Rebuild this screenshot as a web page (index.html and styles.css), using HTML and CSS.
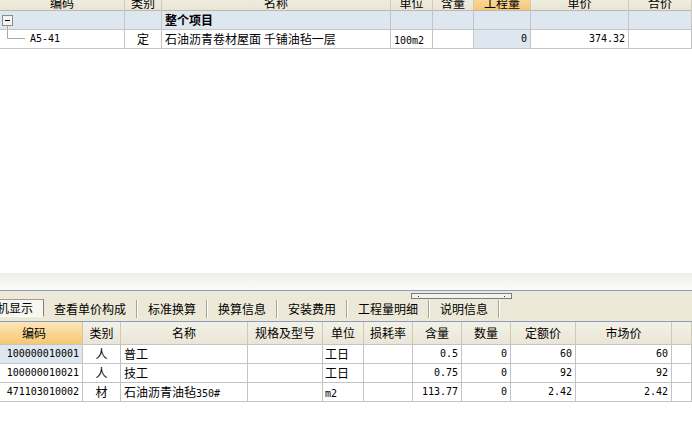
FILE: index.html
```html
<!DOCTYPE html>
<html lang="zh">
<head>
<meta charset="utf-8">
<title>定额</title>
<link rel="stylesheet" href="styles.css">
</head>
<body>
<div class="app">
  <div class="top">
    <div class="grid top-grid">
      <div class="hd">编码</div>
      <div class="hd">类别</div>
      <div class="hd">名称</div>
      <div class="hd">单位</div>
      <div class="hd">含量</div>
      <div class="hd sel">工程量</div>
      <div class="hd">单价</div>
      <div class="hd">合价</div>

      <div class="c r1 tree"><svg width="16" height="18" viewBox="0 0 16 18"><rect x="2.5" y="4.5" width="10" height="10" fill="#F4F4F4" stroke="#8C8C8C"/><path d="M5 9.5H10" stroke="#000"/><path d="M7.5 15V18" stroke="#A8A8A8"/></svg></div>
      <div class="c r1"></div>
      <div class="c r1 b">整个项目</div>
      <div class="c r1"></div>
      <div class="c r1"></div>
      <div class="c r1"></div>
      <div class="c r1"></div>
      <div class="c r1"></div>

      <div class="c tree"><svg width="25" height="18" viewBox="0 0 25 18"><path d="M7.5 0V8.5H25" stroke="#A8A8A8" fill="none"/></svg><span class="n code">A5-41</span></div>
      <div class="c ctr">定</div>
      <div class="c">石油沥青卷材屋面 千铺油毡一层</div>
      <div class="c"><span class="n">100m2</span></div>
      <div class="c"></div>
      <div class="c r1 rt n">0</div>
      <div class="c rt n">374.32</div>
      <div class="c"></div>
    </div>
  </div>

  <div class="split"></div>

  <div class="tabbar">
    <div class="handle"><i></i><i></i></div>
    <div class="tab active">人材机显示</div>
    <div class="tab">查看单价构成</div><span class="sep"></span>
    <div class="tab">标准换算</div><span class="sep"></span>
    <div class="tab">换算信息</div><span class="sep"></span>
    <div class="tab">安装费用</div><span class="sep"></span>
    <div class="tab">工程量明细</div><span class="sep"></span>
    <div class="tab">说明信息</div><span class="sep"></span>
  </div>

  <div class="bottom">
    <div class="grid bot-grid">
      <div class="bh sel">编码</div>
      <div class="bh">类别</div>
      <div class="bh">名称</div>
      <div class="bh">规格及型号</div>
      <div class="bh">单位</div>
      <div class="bh">损耗率</div>
      <div class="bh">含量</div>
      <div class="bh">数量</div>
      <div class="bh">定额价</div>
      <div class="bh">市场价</div>
      <div class="bh"></div>

      <div class="c r1 rt n">100000010001</div>
      <div class="c ctr">人</div>
      <div class="c">普工</div>
      <div class="c"></div>
      <div class="c l2">工日</div>
      <div class="c"></div>
      <div class="c rt n">0.5</div>
      <div class="c rt n">0</div>
      <div class="c rt n">60</div>
      <div class="c rt n">60</div>
      <div class="c"></div>

      <div class="c rt n">100000010021</div>
      <div class="c ctr">人</div>
      <div class="c">技工</div>
      <div class="c"></div>
      <div class="c l2">工日</div>
      <div class="c"></div>
      <div class="c rt n">0.75</div>
      <div class="c rt n">0</div>
      <div class="c rt n">92</div>
      <div class="c rt n">92</div>
      <div class="c"></div>

      <div class="c rt n">471103010002</div>
      <div class="c ctr">材</div>
      <div class="c">石油沥青油毡<span class="n">350#</span></div>
      <div class="c"></div>
      <div class="c l2"><span class="n">m2</span></div>
      <div class="c"></div>
      <div class="c rt n">113.77</div>
      <div class="c rt n">0</div>
      <div class="c rt n">2.42</div>
      <div class="c rt n">2.42</div>
      <div class="c"></div>
    </div>
  </div>
</div>
</body>
</html>
```

FILE: styles.css
```css
* { box-sizing: border-box; }
html, body { margin: 0; padding: 0; }
body {
  width: 692px;
  height: 424px;
  overflow: hidden;
  background: #fff;
  color: #000;
  font: 12px "Noto Sans CJK SC", "Liberation Sans", sans-serif;
}
.app { display: flex; flex-direction: column; height: 424px; }

.top { flex: 1; overflow: hidden; background: #fff; }
.grid { display: grid; }
.top-grid {
  grid-template-columns: 125px 37px 229px 42px 41px 57px 98px 63px;
  grid-template-rows: 21px;
  grid-auto-rows: 19px;
  margin-top: -10px;
}
.hd {
  background: linear-gradient(#F5F3EA, #E9E5D4);
  border-right: 1px solid #CFCBBA;
  border-bottom: 1px solid #BDB9A8;
  text-align: center;
  padding-top: 5px;
  line-height: 15px;
  white-space: nowrap;
}
.hd.sel, .bh.sel { background: linear-gradient(#FCE6B8, #F6C772); }

.c {
  border-right: 1px solid #C4C4C4;
  border-bottom: 1px solid #C4C4C4;
  line-height: 18px;
  padding: 0 3px;
  white-space: nowrap;
  overflow: hidden;
}
.r1 { background: #DEE6F0; }
.b { font-weight: bold; }
.ctr { text-align: center; }
.rt { text-align: right; }
.l2 { padding-left: 2px; }
.tree { padding: 0; display: flex; align-items: flex-start; }
.tree svg { display: block; flex: none; }
.code { margin-left: 5px; }
.n { font-family: "DejaVu Sans Mono", "Liberation Mono", monospace; font-size: 10px; }

.split {
  height: 18px;
  flex: none;
  background: linear-gradient(#ECECE9, #F7F7F5 60%, #FBFBF9);
  border-bottom: 1px solid #8A9CB8;
}

.tabbar {
  position: relative;
  flex: none;
  height: 31px;
  background: #ECE9D8;
  border-bottom: 1px solid #8A9CB8;
  display: flex;
  align-items: center;
  padding-top: 6px;
  white-space: nowrap;
}
.handle {
  position: absolute;
  left: 411px;
  top: 2px;
  width: 101px;
  height: 6px;
  border: 1px solid #7C7C7C;
  background: #F2F2EE;
}
.handle i {
  position: absolute;
  top: 2px;
  width: 1px;
  height: 1px;
  background: #1A2A8A;
}
.handle i:first-child { left: 6px; }
.handle i:last-child { right: 6px; }

.tab {
  padding: 0 10px;
  line-height: 16px;
}
.tab.active {
  margin-left: -31px;
  padding: 0 10px 0 4px;
  height: 18px;
  line-height: 16px;
  background: #F7F6F0;
  border-top: 1px solid #9C9C9C;
  border-right: 1px solid #7E7E7E;
  border-bottom: 1px solid #FFFFFF;
  margin-top: -2px;
}
.sep {
  width: 2px;
  height: 18px;
  border-left: 1px solid #A6A498;
  border-right: 1px solid #FFFFFF;
}

.bottom { flex: none; height: 102px; background: #fff; overflow: hidden; }
.bot-grid {
  grid-template-columns: 97px 38px 127px 75px 41px 49px 49px 49px 65px 96px 20px;
  grid-template-rows: 23px;
  grid-auto-rows: 19px;
  margin-left: -14px;
}
.bh {
  background: linear-gradient(#F3F1E7, #EAE6D6);
  border-right: 1px solid #CDC9B8;
  border-bottom: 1px solid #C4C4C4;
  text-align: center;
  line-height: 22px;
  white-space: nowrap;
}
```
